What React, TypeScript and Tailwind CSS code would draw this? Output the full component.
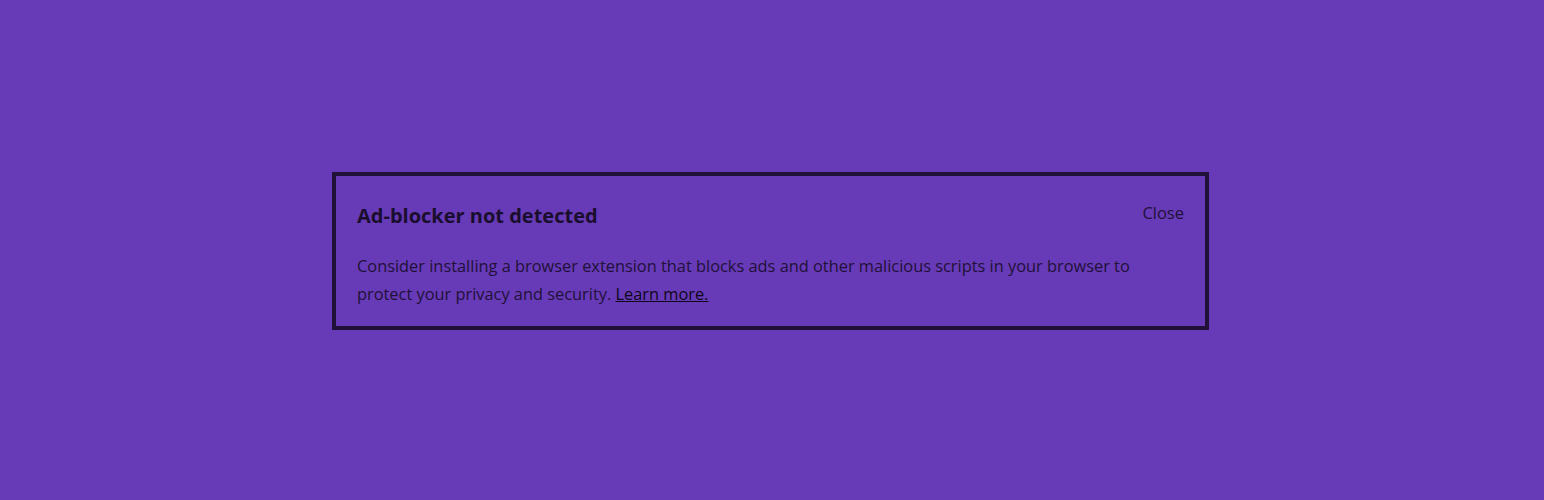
export default function App() {
  return (
    <div
      className="min-h-[500px] w-full bg-[#673ab7] flex items-center justify-center pr-[3px] pt-[2px]"
      style={{ fontFamily: '"Open Sans", "Noto Sans", sans-serif' }}
    >
      <div className="w-[877px] border-4 border-[#1f1137] px-[21px] pt-[26px] pb-[18px] text-[#1f1137]">
        <div className="flex items-start justify-between">
          <h2 className="text-[20px] leading-[28px] font-bold text-[#1a0e2e]">Ad-blocker not detected</h2>
          <button className="text-[16.5px] leading-[24px] text-[#1f1137] -mt-[1px]">Close</button>
        </div>
        <p className="mt-[22px] text-[16.37px] leading-[28px]">
          Consider installing a browser extension that blocks ads and other malicious scripts in your browser to
          <br />
          protect your privacy and security.{" "}
          <a href="#" className="underline text-[#0d0717]">Learn more.</a>
        </p>
      </div>
    </div>
  );
}
